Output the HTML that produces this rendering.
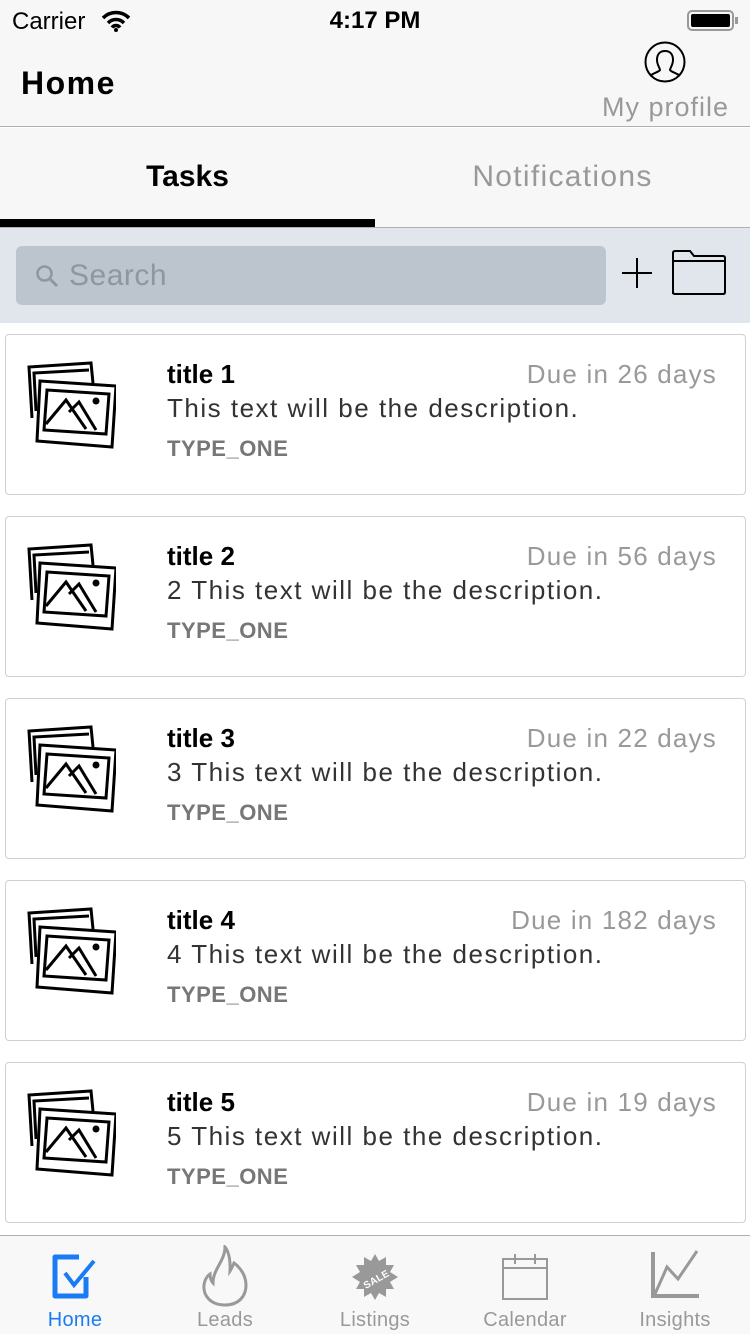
<!DOCTYPE html>
<html><head><style>
*{margin:0;padding:0;box-sizing:border-box}
body{width:750px;height:1334px;background:#fff;font-family:"Liberation Sans",sans-serif;position:relative;overflow:hidden}
.abs{position:absolute}
.card{position:absolute;left:5px;width:741px;height:161px;border:1px solid #d0d0d0;border-radius:4px;background:#fff}
.card .t{position:absolute;left:161px;top:24px;font-size:26px;font-weight:bold;color:#000}
.card .d{position:absolute;left:161px;top:58px;font-size:26px;color:#333;letter-spacing:1.5px}
.card .ty{position:absolute;left:161px;top:101px;font-size:22px;font-weight:bold;color:#777;letter-spacing:0.5px}
.card .due{position:absolute;right:28px;top:24px;font-size:26px;color:#999;letter-spacing:1.2px}
.card svg{position:absolute;left:18px;top:26px}
.tab{position:absolute;top:1240px;width:150px;text-align:center;font-size:20px;color:#999;letter-spacing:0.3px}
.tab .l{position:absolute;top:69px;width:150px;left:0}
</style></head><body>
<div class="abs" style="left:0;top:0;width:750px;height:127px;background:#f7f7f7;border-bottom:1px solid #b0b0b0"></div>
<div class="abs" style="left:12px;top:8px;font-size:24px">Carrier</div>
<svg class="abs" style="left:100px;top:10px" width="32" height="22" viewBox="0 0 32 22"><path d="M3 8a18 18 0 0 1 26 0M8 13a11 11 0 0 1 16 0M12 17.5a5 5 0 0 1 8 0" stroke="#000" stroke-width="3.5" fill="none"/><circle cx="16" cy="20" r="2" fill="#000"/></svg>
<div class="abs" style="left:0;width:750px;text-align:center;top:7px;font-size:24px;font-weight:bold">4:17 PM</div>
<div class="abs" style="left:687px;top:10px;width:47px;height:21px;border:2px solid #999;border-radius:5px;padding:2px"><div style="background:#000;width:100%;height:100%;border-radius:2px"></div></div>
<div class="abs" style="left:735px;top:17px;width:3px;height:7px;background:#999"></div>
<div class="abs" style="left:21px;top:65px;font-size:32px;font-weight:bold;letter-spacing:1.5px">Home</div>
<svg class="abs" style="left:644px;top:41px" width="42" height="42" viewBox="0 0 42 42"><circle cx="21" cy="21" r="19.5" fill="none" stroke="#000" stroke-width="2"/><path d="M6 35c3-3 9-4 10-6 0-2-3-5-3-10 0-6 3-9 8-9s8 3 8 9c0 5-3 8-3 10 1 2 7 3 10 6" fill="none" stroke="#000" stroke-width="2"/></svg>
<div class="abs" style="left:602px;top:92px;font-size:27px;color:#999;letter-spacing:1px">My profile</div>
<div class="abs" style="left:0;top:128px;width:750px;height:100px;background:#f7f7f7;border-bottom:1px solid #b0b0b0"></div>
<div class="abs" style="left:0;width:375px;text-align:center;top:160px;font-size:30px;font-weight:bold">Tasks</div>
<div class="abs" style="left:375px;width:375px;text-align:center;top:160px;font-size:30px;color:#999;letter-spacing:1.3px">Notifications</div>
<div class="abs" style="left:0;top:219px;width:375px;height:8px;background:#000"></div>
<div class="abs" style="left:0;top:228px;width:750px;height:95px;background:#e1e6ec"></div>
<div class="abs" style="left:16px;top:246px;width:590px;height:59px;background:#bcc4cd;border-radius:6px"></div>
<svg class="abs" style="left:35px;top:264px" width="24" height="24" viewBox="0 0 24 24"><circle cx="9.5" cy="9.5" r="7" fill="none" stroke="#8e96a0" stroke-width="2.5"/><path d="M15 15l7 7" stroke="#8e96a0" stroke-width="3"/></svg>
<div class="abs" style="left:69px;top:259px;font-size:30px;color:#8e96a0;letter-spacing:0.5px">Search</div>
<svg class="abs" style="left:620px;top:256px" width="34" height="34"><path d="M17 2v30M2 17h30" stroke="#000" stroke-width="2"/></svg>
<svg class="abs" style="left:670px;top:248px" width="56" height="48" viewBox="0 0 56 48"><path d="M3 46V5q0-2 2-2h15l4 5h29q2 0 2 2v34q0 2-2 2H5q-2 0-2-2zM3 13h51" fill="none" stroke="#000" stroke-width="2"/></svg>

<div class="card" style="top:334px"><svg width="92" height="90" viewBox="0 0 92 90"><g fill="none" stroke="#000" stroke-width="3"><path d="M8 57L5 6l62-4 2 20"/><path d="M12 50L10 12l55-3"/><path d="M16 20l76 5-4 61-75-6z" fill="#fff"/><path d="M23 29l62 4-3 40-62-4z"/><path d="M22 63l20-24 20 29M45 51l10-10 17 28"/></g><circle cx="72" cy="40" r="3.5"/></svg>
<div class="t">title 1</div><div class="due">Due in 26 days</div><div class="d">This text will be the description.</div><div class="ty">TYPE_ONE</div></div>
<div class="card" style="top:516px"><svg width="92" height="90" viewBox="0 0 92 90"><g fill="none" stroke="#000" stroke-width="3"><path d="M8 57L5 6l62-4 2 20"/><path d="M12 50L10 12l55-3"/><path d="M16 20l76 5-4 61-75-6z" fill="#fff"/><path d="M23 29l62 4-3 40-62-4z"/><path d="M22 63l20-24 20 29M45 51l10-10 17 28"/></g><circle cx="72" cy="40" r="3.5"/></svg>
<div class="t">title 2</div><div class="due">Due in 56 days</div><div class="d">2 This text will be the description.</div><div class="ty">TYPE_ONE</div></div>
<div class="card" style="top:698px"><svg width="92" height="90" viewBox="0 0 92 90"><g fill="none" stroke="#000" stroke-width="3"><path d="M8 57L5 6l62-4 2 20"/><path d="M12 50L10 12l55-3"/><path d="M16 20l76 5-4 61-75-6z" fill="#fff"/><path d="M23 29l62 4-3 40-62-4z"/><path d="M22 63l20-24 20 29M45 51l10-10 17 28"/></g><circle cx="72" cy="40" r="3.5"/></svg>
<div class="t">title 3</div><div class="due">Due in 22 days</div><div class="d">3 This text will be the description.</div><div class="ty">TYPE_ONE</div></div>
<div class="card" style="top:880px"><svg width="92" height="90" viewBox="0 0 92 90"><g fill="none" stroke="#000" stroke-width="3"><path d="M8 57L5 6l62-4 2 20"/><path d="M12 50L10 12l55-3"/><path d="M16 20l76 5-4 61-75-6z" fill="#fff"/><path d="M23 29l62 4-3 40-62-4z"/><path d="M22 63l20-24 20 29M45 51l10-10 17 28"/></g><circle cx="72" cy="40" r="3.5"/></svg>
<div class="t">title 4</div><div class="due">Due in 182 days</div><div class="d">4 This text will be the description.</div><div class="ty">TYPE_ONE</div></div>
<div class="card" style="top:1062px"><svg width="92" height="90" viewBox="0 0 92 90"><g fill="none" stroke="#000" stroke-width="3"><path d="M8 57L5 6l62-4 2 20"/><path d="M12 50L10 12l55-3"/><path d="M16 20l76 5-4 61-75-6z" fill="#fff"/><path d="M23 29l62 4-3 40-62-4z"/><path d="M22 63l20-24 20 29M45 51l10-10 17 28"/></g><circle cx="72" cy="40" r="3.5"/></svg>
<div class="t">title 5</div><div class="due">Due in 19 days</div><div class="d">5 This text will be the description.</div><div class="ty">TYPE_ONE</div></div>

<div class="abs" style="left:0;top:1235px;width:750px;height:99px;background:#f8f8f8;border-top:1px solid #b0b0b0"></div>
<div class="tab" style="left:0;color:#1a7cf5"><svg style="margin-top:13px" width="48" height="48" viewBox="0 0 48 48"><path d="M35 24v19H4V4h24" fill="none" stroke="#1a7cf5" stroke-width="5" stroke-linejoin="round"/><path d="M14 20l9 12L43 8" fill="none" stroke="#1a7cf5" stroke-width="4"/></svg><div class="l">Home</div></div>
<div class="tab" style="left:150px"><svg style="margin-top:5px" width="50" height="62" viewBox="0 0 50 62"><path d="M25 60C10 60 3 50 4 40c1-8 6-11 6-11 0 6 3 9 3 9 0-14 12-22 12-36 0 0 6 6 5 24 2-3 4-8 4-8 0 0 12 8 12 22 0 12-8 20-21 20z" fill="none" stroke="#999" stroke-width="3"/></svg><div class="l">Leads</div></div>
<div class="tab" style="left:300px"><svg style="margin-top:14px" width="50" height="46" viewBox="0 0 50 46"><polygon points="25,0 29,7 36,3 36,11 44,11 40,18 48,23 40,28 44,35 36,35 36,43 29,39 25,46 21,39 14,43 14,35 6,35 10,28 2,23 10,18 6,11 14,11 14,3 21,7" fill="#999"/><text x="25" y="29" font-size="10" font-weight="bold" fill="#fff" text-anchor="middle" transform="rotate(-30 25 23)" font-family="Liberation Sans">SALE</text></svg><div class="l">Listings</div></div>
<div class="tab" style="left:450px"><svg style="margin-top:13px" width="48" height="48" viewBox="0 0 48 48"><path d="M2 6h44v40H2zM2 15h44M14 1v10M34 1v10" fill="none" stroke="#999" stroke-width="2"/></svg><div class="l">Calendar</div></div>
<div class="tab" style="left:600px"><svg style="margin-top:10px" width="52" height="50" viewBox="0 0 52 50"><path d="M4 2v44h46" fill="none" stroke="#999" stroke-width="4"/><path d="M6 44L18 17l11 12 19-28" fill="none" stroke="#999" stroke-width="3"/></svg><div class="l">Insights</div></div>
</body></html>
